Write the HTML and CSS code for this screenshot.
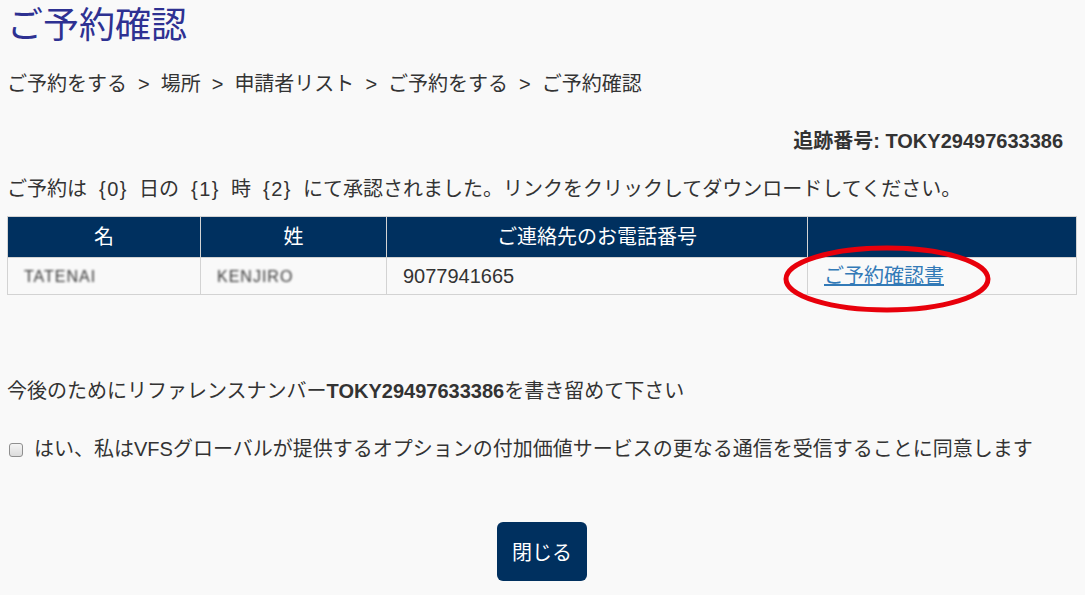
FILE: index.html
```html
<!DOCTYPE html>
<html lang="ja">

<head>
  <meta charset="UTF-8" />
  <meta name="viewport" content="width=device-width, initial-scale=1.0" />
  <title>ご予約確認</title>
  <link rel="stylesheet" href="styles.css">
</head>

<body>
  <div class="page">
    <h1 class="title">ご予約確認</h1>

    <p class="crumbs">
      <span>ご予約をする</span><span class="sep">&gt;</span><span>場所</span><span class="sep">&gt;</span><span>申請者リスト</span><span class="sep">&gt;</span><span>ご予約をする</span><span class="sep">&gt;</span><span>ご予約確認</span>
    </p>

    <p class="track">追跡番号: TOKY29497633386</p>

    <p class="msg">ご予約は<span class="ph">{0}</span>日の<span class="ph">{1}</span>時<span class="ph">{2}</span>にて承認されました。リンクをクリックしてダウンロードしてください。</p>

    <table class="result">
      <thead>
        <tr>
          <th class="c1">名</th>
          <th class="c2">姓</th>
          <th class="c3">ご連絡先のお電話番号</th>
          <th class="c4"></th>
        </tr>
      </thead>
      <tbody>
        <tr>
          <td><span class="masked">TATENAI</span></td>
          <td><span class="masked">KENJIRO</span></td>
          <td>9077941665</td>
          <td class="link-cell">
            <a href="javascript:;">ご予約確認書</a>
            <svg class="circle" width="212" height="70" viewBox="0 0 212 70">
              <ellipse cx="105" cy="35" rx="101" ry="31" fill="none" stroke="#e8000b" stroke-width="5" />
            </svg>
          </td>
        </tr>
      </tbody>
    </table>

    <p class="note">今後のためにリファレンスナンバー<b>TOKY29497633386</b>を書き留めて下さい</p>

    <label class="agree"><input type="checkbox" />はい、私はVFSグローバルが提供するオプションの付加価値サービスの更なる通信を受信することに同意します</label>

    <div class="actions">
      <button class="btn" type="button">閉じる</button>
    </div>
  </div>
</body>

</html>
```

FILE: styles.css
```css
* {
  margin: 0;
  padding: 0;
  box-sizing: border-box;
}

body {
  background: #f9f9f9;
  color: #333;
  font-family: "Liberation Sans", "Noto Sans CJK JP", sans-serif;
  font-size: 20px;
  line-height: 28px;
}

.page {
  padding: 4px 8px 0 7px;
}

.title {
  font-size: 36px;
  line-height: 44px;
  font-weight: normal;
  color: #2e3192;
}

.crumbs {
  margin-top: 22px;
}

.crumbs .sep {
  margin: 0 11px;
}

.track {
  margin-top: 29px;
  text-align: right;
  font-weight: bold;
  padding-right: 14px;
}

.msg {
  margin-top: 20px;
}

.msg .ph {
  padding: 0 11px 0 12px;
  letter-spacing: 1.5px;
}

.result {
  margin-top: 13px;
  width: 1070px;
  border-collapse: collapse;
}

.result th,
.result td {
  border: 1px solid #d3d3d3;
}

.result th {
  background: #00305f;
  color: #fff;
  font-weight: normal;
  height: 41px;
  text-align: center;
}

.result td {
  height: 37px;
  padding: 0 16px;
}

.result .c1 { width: 193px; }
.result .c2 { width: 186px; }
.result .c3 { width: 421px; }

.masked {
  color: #3a3a3a;
  font-size: 16px;
  letter-spacing: 1px;
  filter: blur(0.9px);
}

.link-cell {
  position: relative;
}

.link-cell a {
  color: #337ab7;
  text-decoration: underline;
}

.link-cell .circle {
  position: absolute;
  left: -26px;
  top: -14px;
}

.note {
  margin-top: 82px;
}

.note b {
  font-weight: bold;
}

.agree {
  display: block;
  margin-top: 30px;
}

.agree input {
  -webkit-appearance: none;
  appearance: none;
  display: inline-block;
  width: 14px;
  height: 14px;
  margin: 0 11px 0 2px;
  vertical-align: -1px;
  border: 1px solid #8f8f8f;
  border-radius: 3px;
  background: linear-gradient(#f4f4f4, #dcdcdc);
}

.actions {
  margin-top: 59px;
  display: flex;
  justify-content: center;
}

.btn {
  width: 90px;
  height: 59px;
  border: none;
  border-radius: 6px;
  background: #00305f;
  color: #fff;
  font-family: inherit;
  font-size: 20px;
}
```
